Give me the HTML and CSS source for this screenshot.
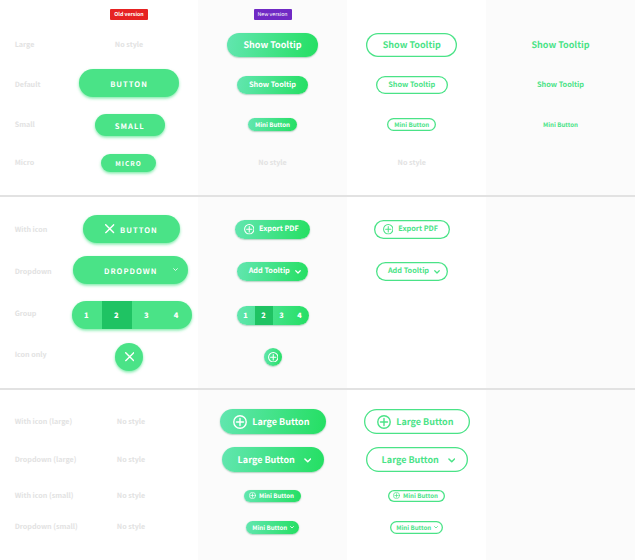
FILE: index.html
```html
<!DOCTYPE html>
<html lang="en">
<head>
<meta charset="utf-8">
<title>Button styles</title>
<link rel="stylesheet" href="styles.css">
</head>
<body>
<svg class="defs" aria-hidden="true">
  <symbol id="plus" viewBox="0 0 20 20"><circle cx="10" cy="10" r="8.9"/><path d="M10 5v10M5 10h10"/></symbol>
  <symbol id="cross" viewBox="0 0 20 20"><path d="M1.5 1.5l17 17M18.500 1.500l-17 17"/></symbol>
  <symbol id="chevron" viewBox="0 0 12 8"><path d="M1.500 1.500l4.500 4.500 4.500-4.500"/></symbol>
</svg>
<main class="sheet">
  <section class="group sizes">
    <div class="cell"></div>
    <div class="cell"><span class="badge old-badge">Old version</span></div>
    <div class="cell"><span class="badge new-badge">New version</span></div>
    <div class="cell"></div>
    <div class="cell"></div>

    <div class="cell label">Large</div>
    <div class="cell"><span class="none">No style</span></div>
    <div class="cell"><span class="btn fill large">Show Tooltip</span></div>
    <div class="cell"><span class="btn line large">Show Tooltip</span></div>
    <div class="cell"><span class="btn text large">Show Tooltip</span></div>

    <div class="cell label">Default</div>
    <div class="cell"><span class="old old-default">BUTTON</span></div>
    <div class="cell"><span class="btn fill">Show Tooltip</span></div>
    <div class="cell"><span class="btn line">Show Tooltip</span></div>
    <div class="cell"><span class="btn text">Show Tooltip</span></div>

    <div class="cell label">Small</div>
    <div class="cell"><span class="old old-small">SMALL</span></div>
    <div class="cell"><span class="btn fill mini">Mini Button</span></div>
    <div class="cell"><span class="btn line mini">Mini Button</span></div>
    <div class="cell"><span class="btn text mini">Mini Button</span></div>

    <div class="cell label">Micro</div>
    <div class="cell"><span class="old old-micro">MICRO</span></div>
    <div class="cell"><span class="none">No style</span></div>
    <div class="cell"><span class="none">No style</span></div>
    <div class="cell"></div>
  </section>

  <section class="group variants">
    <div class="cell label">With icon</div>
    <div class="cell"><span class="old old-icon"><svg class="ic"><use href="#cross"/></svg>BUTTON</span></div>
    <div class="cell"><span class="btn fill with-icon"><svg class="ic"><use href="#plus"/></svg>Export PDF</span></div>
    <div class="cell"><span class="btn line with-icon"><svg class="ic"><use href="#plus"/></svg>Export PDF</span></div>
    <div class="cell"></div>

    <div class="cell label">Dropdown</div>
    <div class="cell"><span class="old old-drop">DROPDOWN<svg class="chev"><use href="#chevron"/></svg></span></div>
    <div class="cell"><span class="btn fill drop">Add Tooltip<svg class="chev"><use href="#chevron"/></svg></span></div>
    <div class="cell"><span class="btn line drop">Add Tooltip<svg class="chev"><use href="#chevron"/></svg></span></div>
    <div class="cell"></div>

    <div class="cell label raised">Group</div>
    <div class="cell"><span class="old old-group"><b>1</b><b class="on">2</b><b>3</b><b>4</b></span></div>
    <div class="cell"><span class="btn fill segmented"><b>1</b><b class="on">2</b><b>3</b><b>4</b></span></div>
    <div class="cell"></div>
    <div class="cell"></div>

    <div class="cell label raised">Icon only</div>
    <div class="cell"><span class="old old-round"><svg class="ic"><use href="#cross"/></svg></span></div>
    <div class="cell"><span class="btn fill round"><svg class="ic"><use href="#plus"/></svg></span></div>
    <div class="cell"></div>
    <div class="cell"></div>
  </section>

  <section class="group scales">
    <div class="cell label">With icon (large)</div>
    <div class="cell"><span class="none">No style</span></div>
    <div class="cell"><span class="btn fill large with-icon"><svg class="ic"><use href="#plus"/></svg>Large Button</span></div>
    <div class="cell"><span class="btn line large with-icon"><svg class="ic"><use href="#plus"/></svg>Large Button</span></div>
    <div class="cell"></div>

    <div class="cell label">Dropdown (large)</div>
    <div class="cell"><span class="none">No style</span></div>
    <div class="cell"><span class="btn fill large drop">Large Button<svg class="chev"><use href="#chevron"/></svg></span></div>
    <div class="cell"><span class="btn line large drop">Large Button<svg class="chev"><use href="#chevron"/></svg></span></div>
    <div class="cell"></div>

    <div class="cell label">With icon (small)</div>
    <div class="cell"><span class="none">No style</span></div>
    <div class="cell"><span class="btn fill mini with-icon"><svg class="ic"><use href="#plus"/></svg>Mini Button</span></div>
    <div class="cell"><span class="btn line mini with-icon"><svg class="ic"><use href="#plus"/></svg>Mini Button</span></div>
    <div class="cell"></div>

    <div class="cell label">Dropdown (small)</div>
    <div class="cell"><span class="none">No style</span></div>
    <div class="cell"><span class="btn fill mini drop">Mini Button<svg class="chev"><use href="#chevron"/></svg></span></div>
    <div class="cell"><span class="btn line mini drop">Mini Button<svg class="chev"><use href="#chevron"/></svg></span></div>
    <div class="cell"></div>
  </section>
</main>
</body>
</html>
```
FILE: styles.css
```css
* { box-sizing: border-box; }
body {
  margin: 0;
  background: #fff;
  font-family: "Noto Sans CJK SC", "Noto Sans", sans-serif;
  font-weight: 700;
  line-height: 1;
  text-rendering: geometricPrecision;
  white-space: nowrap;
}
.defs { display: none; }
.sheet {
  width: 635px;
  height: 560px;
  overflow: hidden;
  background: linear-gradient(90deg, #fff 198px, #fbfbfb 198px 347px, #fff 347px 486px, #fbfbfb 486px);
}
.group {
  display: grid;
  grid-template-columns: 60px 138px 149px 139px 149px;
  border-bottom: 2px solid #e2e2e2;
}
.sizes { height: 197px; padding-top: 4.8px; grid-template-rows: 20px 40px 40.4px 38.6px 38.2px; }
.variants { height: 193px; padding-top: 11.7px; grid-template-rows: 42px 42px 46px 36.3px; }
.scales { padding-top: 12.7px; grid-template-rows: 38px 38px 34.6px 28px; border: 0; }
.cell { display: flex; align-items: center; justify-content: center; }
.sizes .cell:nth-child(5n+4), .variants .cell:nth-child(5n+4) { padding-right: 9.500px; }
.cell.label { justify-content: flex-start; padding: 1.500px 0 0 14.700px; }
.label, .none { font-size: 7.15px; font-weight: 700; color: #e2e2e2; }
.none { padding-top: 1.500px; }
.sizes .label { padding-top: 2px; }
.scales .label { padding-top: 1px; }
.cell.label.raised { padding: 0 0 3px 14.700px; }
.cell.label.raised:nth-child(n+16) { padding-bottom: 2px; }
.scales .none { margin-left: 4px; padding-top: 1px; }

.badge {
  display: flex; align-items: center; justify-content: center;
  width: 38px; height: 11px; border-radius: 1px;
  color: #fff; font-size: 5.250px;
}
.old-badge { background: #e62222; }
.new-badge { background: #7029c4; font-weight: 400; }

svg { flex: none; fill: none; stroke: currentColor; stroke-linecap: round; stroke-linejoin: round; }

.btn {
  display: flex; align-items: center; justify-content: center;
  width: 71.500px; height: 18.500px; border-radius: 13px;
  padding-top: .9px;
  font-size: 7.3px;
}
.large { width: 91px; height: 24.500px; padding-top: 0; font-size: 9px; }
.mini { width: 49px; height: 12.700px; font-size: 6.150px; }
.fill {
  color: #fff;
  background: linear-gradient(100deg, #62e6b0, #24df62);
  box-shadow: 0 0.7px 1.500px rgba(20, 120, 70, .4);
}
.line { color: #4ae387; box-shadow: inset 0 0 0 1.300px #4ae387; }
.text { color: #4ae387; }
.btn .ic { width: 10.500px; height: 10.500px; stroke-width: 2; margin: 0 4.800px .9px 0; }
.btn .chev { width: 6px; height: 4px; stroke-width: 2.400; margin: .5px 0 0 5px; }
.with-icon { width: 75.700px; padding-right: 2.500px; }
.drop { padding-left: 4.500px; }
.large.with-icon { width: 106px; padding-right: 2px; }
.large.with-icon .ic { width: 14px; height: 14px; margin-bottom: 0; }
.large.drop { width: 102px; padding-left: 4px; }
.large.drop .chev { width: 7.500px; height: 5px; margin: 1px 0 0 9px; }
.mini.with-icon { width: 57px; padding-right: 1.500px; }
.mini.with-icon .ic { width: 7px; height: 7px; margin-right: 2.500px; }
.mini.drop { width: 53.500px; padding-left: 1.500px; }
.mini.drop .chev { width: 4px; height: 2.700px; margin: 0 0 0 3px; }
.btn.round { width: 18.500px; padding: 0; margin-left: .5px; }
.btn.round .ic { margin: 0; }

.old {
  display: flex; align-items: center; justify-content: center;
  height: 28px; border-radius: 14px; padding-top: 3px;
  background: #4ae387; color: #fff;
  font-size: 7.6px; letter-spacing: 1px;
  box-shadow: 0 1.500px 3px rgba(74, 227, 135, .7);
}
.old-default { width: 100px; margin-bottom: 3.400px; }
.old-small { width: 70.500px; height: 21.500px; margin: 1.400px 0 0 1.500px; }
.old-micro { width: 55px; height: 18.300px; font-size: 6.5px; margin-right: 1px; padding-top: 0; }
.old-icon { width: 97.500px; margin: 0 0 1.400px 4.800px; }
.old .ic { width: 9.500px; height: 9.500px; stroke-width: 3; }
.old-icon .ic { margin: 0 5.500px 3px 0; }
.old-drop { width: 115px; margin: 0 0 2.400px 2.400px; padding-left: 22px; }
.old-drop .chev { width: 5px; height: 3.400px; stroke-width: 2; margin: 0 0 5px 16px; }
.old-group { width: 119.700px; margin: 0 0 1.400px 5.600px; padding: 0; overflow: hidden; letter-spacing: 0; }
.old-group b { padding: 2.500px 1px 0 0; }
.old-round { width: 28px; margin-left: .5px; padding: 0; }
.segmented { overflow: hidden; width: 72px; padding: 0; }
.old-group b, .segmented b { flex: 1; align-self: stretch; display: flex; align-items: center; justify-content: center; }
.segmented b { padding-top: 1.500px; }
.on { background: #1fc363; }
```
